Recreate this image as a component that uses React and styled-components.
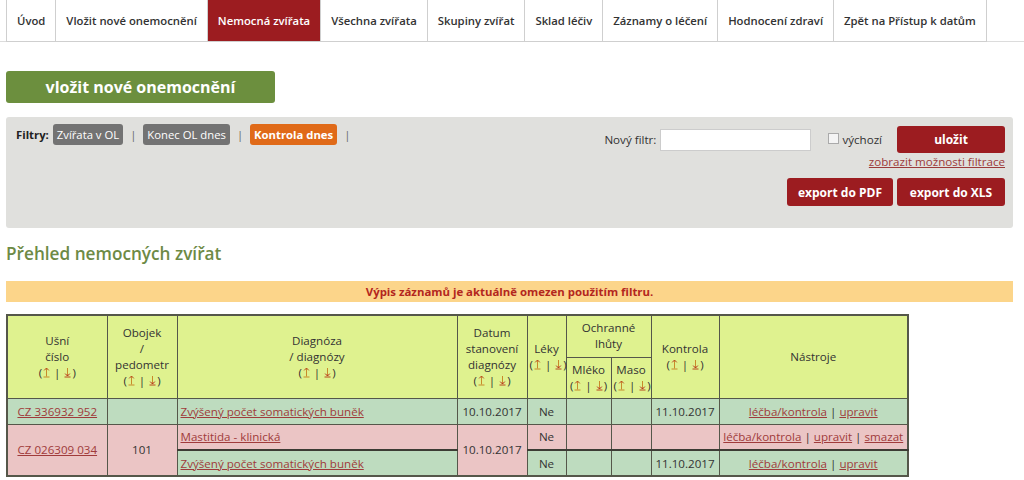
import React from "react";
import styled, { createGlobalStyle } from "styled-components";

const Global = createGlobalStyle`
  body { margin: 0; font-family: "Open Sans", "DejaVu Sans", sans-serif; color: #333; background: #fff; }
  * { box-sizing: border-box; }
`;

const Page = styled.div`
  width: 1024px;
  padding: 0 11px 0 6px;
`;

const Tabs = styled.nav`
  display: flex;
  height: 42px;
  margin-left: -6px;
  margin-right: -11px;
  padding-left: 6px;
  border-bottom: 1px solid #dcdcdc;
`;

const Tab = styled.a`
  display: flex;
  align-items: center;
  padding: 0 10px;
  font-size: 11.3px;
  font-weight: 600;
  color: ${(p) => (p.$active ? "#fff" : "#333")};
  background: ${(p) => (p.$active ? "#9c1c20" : "#fff")};
  border-left: 1px solid #cfcfcf;
  border-right: ${(p) => (p.$last ? "1px solid #cfcfcf" : "none")};
  border-bottom: 1px solid #cfcfcf;
  margin-bottom: -1px;
  white-space: nowrap;
  text-decoration: none;
`;

const BigButton = styled.button`
  display: block;
  margin-top: 29px;
  width: 269px;
  height: 32px;
  border: none;
  border-radius: 3px;
  background: #6c8f3e;
  color: #fff;
  font-family: inherit;
  font-size: 16px;
  font-weight: 700;
`;

const FilterPanel = styled.section`
  margin-top: 14px;
  height: 111px;
  background: #e0e0dd;
  border-radius: 3px;
  display: flex;
  justify-content: space-between;
  padding: 7px 8px 0 10px;
`;

const ChipRow = styled.div`
  display: flex;
  align-items: center;
  height: 21px;
  font-size: 11.3px;
`;

const FilterLabel = styled.b`
  font-weight: 700;
  color: #222;
  margin-right: 4px;
`;

const Chip = styled.span`
  display: inline-block;
  padding: 2px 4px;
  border-radius: 3px;
  background: ${(p) => (p.$on ? "#e06a18" : "#737373")};
  color: #fff;
  font-weight: ${(p) => (p.$on ? 700 : 400)};
  line-height: 17px;
`;

const Sep = styled.span`
  color: #666;
  margin: 0 7px;
`;

const RightBlock = styled.div`
  display: flex;
  flex-direction: column;
  align-items: flex-end;
  padding-top: 2px;
`;

const SaveRow = styled.div`
  display: flex;
  align-items: center;
  font-size: 11.6px;
`;

const Input = styled.input`
  width: 151px;
  height: 22px;
  margin-left: 4px;
  border: 1px solid #ccc;
  background: #fff;
`;

const CheckLabel = styled.label`
  display: flex;
  align-items: center;
  margin-left: 17px;
  margin-right: 15px;
  color: #333;
`;

const Check = styled.span`
  width: 11px;
  height: 11px;
  border: 1px solid #aaa;
  background: #f4f4f4;
  margin-right: 3px;
  margin-top: -3px;
`;

const RedButton = styled.button`
  width: ${(p) => p.$w || 108}px;
  height: ${(p) => p.$h || 27}px;
  border: none;
  border-radius: 3px;
  background: #9c1c20;
  color: #fff;
  font-family: inherit;
  font-size: 12px;
  font-weight: 700;
`;

const FilterLink = styled.a`
  margin-top: 1px;
  font-size: 11.6px;
  color: #9d3a3a;
  text-decoration: underline;
`;

const ExportRow = styled.div`
  display: flex;
  gap: 4px;
  margin-top: 9px;
`;

const Heading = styled.h2`
  margin: 13px 0 0;
  font-size: 17.2px;
  font-weight: 600;
  color: #6d8a45;
  line-height: 26px;
`;

const Notice = styled.div`
  margin-top: 14px;
  height: 21px;
  background: #fcd58a;
  color: #b3261e;
  font-size: 11.4px;
  font-weight: 700;
  text-align: center;
  line-height: 21px;
`;

const Table = styled.table`
  margin-top: 12px;
  border-collapse: collapse;
  width: 901px;
  font-size: 11.6px;
  border: 2px solid #55574a;
  table-layout: fixed;
`;

const HeadRow = styled.tr`
  height: ${(p) => p.$h}px;
`;

const Th = styled.th`
  background: #dff28f;
  font-weight: 400;
  color: #333;
  border: 1px solid #55574a;
  padding: 0 2px;
  line-height: 16px;
  vertical-align: middle;
  text-align: center;
`;

const BodyRow = styled.tr`
  height: 26px;
`;

const Td = styled.td`
  background: ${(p) => (p.$pink ? "#ebc5c5" : "#bedcbf")};
  border: 1px solid #55574a;
  border-top: ${(p) => (p.$split ? "2px solid #3c3c34" : "1px solid #55574a")};
  padding: 0 3px;
  text-align: ${(p) => p.$align || "center"};
  vertical-align: middle;
  color: #333;
  white-space: nowrap;
`;

const Link = styled.a`
  color: #a03b3b;
  text-decoration: underline;
`;

const SortWrap = styled.span`
  white-space: nowrap;
`;

const ArrowIcon = styled.svg`
  width: 7px;
  height: 11px;
  vertical-align: -1px;
  margin: 0 1px;
`;

const UpArrow = () => (
  <ArrowIcon viewBox="0 0 7 11">
    <path d="M3.5 1 L3.5 9.5" stroke="#c88a2a" strokeWidth="1" fill="none" />
    <path d="M1.2 3.4 L3.5 1 L5.8 3.4" stroke="#b8461e" strokeWidth="1" fill="none" />
    <path d="M0.5 10 L6.5 10" stroke="#c88a2a" strokeWidth="1" />
  </ArrowIcon>
);

const DownArrow = () => (
  <ArrowIcon viewBox="0 0 7 11">
    <path d="M3.5 1 L3.5 9" stroke="#c88a2a" strokeWidth="1" fill="none" />
    <path d="M1.2 6.6 L3.5 9 L5.8 6.6" stroke="#b8261e" strokeWidth="1" fill="none" />
    <path d="M0.5 10 L6.5 10" stroke="#b8461e" strokeWidth="1" />
  </ArrowIcon>
);

const Sort = () => (
  <SortWrap>
    (<UpArrow /> | <DownArrow />)
  </SortWrap>
);

const tabs = [
  "Úvod",
  "Vložit nové onemocnění",
  "Nemocná zvířata",
  "Všechna zvířata",
  "Skupiny zvířat",
  "Sklad léčiv",
  "Záznamy o léčení",
  "Hodnocení zdraví",
  "Zpět na Přístup k datům",
];

export default function App() {
  return (
    <>
      <Global />
      <Page>
        <Tabs>
          {tabs.map((t, i) => (
            <Tab key={t} $active={i === 2} $last={i === tabs.length - 1}>
              {t}
            </Tab>
          ))}
        </Tabs>

        <BigButton>vložit nové onemocnění</BigButton>

        <FilterPanel>
          <ChipRow>
            <FilterLabel>Filtry:</FilterLabel>
            <Chip>Zvířata v OL</Chip>
            <Sep>|</Sep>
            <Chip>Konec OL dnes</Chip>
            <Sep>|</Sep>
            <Chip $on>Kontrola dnes</Chip>
            <Sep>|</Sep>
          </ChipRow>
          <RightBlock>
            <SaveRow>
              Nový filtr:
              <Input />
              <CheckLabel>
                <Check />
                výchozí
              </CheckLabel>
              <RedButton>uložit</RedButton>
            </SaveRow>
            <FilterLink>zobrazit možnosti filtrace</FilterLink>
            <ExportRow>
              <RedButton $w={106} $h={28}>export do PDF</RedButton>
              <RedButton $h={28}>export do XLS</RedButton>
            </ExportRow>
          </RightBlock>
        </FilterPanel>

        <Heading>Přehled nemocných zvířat</Heading>
        <Notice>Výpis záznamů je aktuálně omezen použitím filtru.</Notice>

        <Table>
          <colgroup>
            <col style={{ width: 100 }} />
            <col style={{ width: 70 }} />
            <col style={{ width: 280 }} />
            <col style={{ width: 70 }} />
            <col style={{ width: 39 }} />
            <col style={{ width: 45 }} />
            <col style={{ width: 40 }} />
            <col style={{ width: 68 }} />
            <col style={{ width: 189 }} />
          </colgroup>
          <thead>
            <HeadRow $h={42}>
              <Th rowSpan={2}>
                Ušní<br />číslo<br /><Sort />
              </Th>
              <Th rowSpan={2}>
                Obojek<br />/<br />pedometr<br /><Sort />
              </Th>
              <Th rowSpan={2}>
                Diagnóza<br />/ diagnózy<br /><Sort />
              </Th>
              <Th rowSpan={2}>
                Datum<br />stanovení<br />diagnózy<br /><Sort />
              </Th>
              <Th rowSpan={2}>
                Léky<br /><Sort />
              </Th>
              <Th colSpan={2}>
                Ochranné<br />lhůty
              </Th>
              <Th rowSpan={2}>
                Kontrola<br /><Sort />
              </Th>
              <Th rowSpan={2}>Nástroje</Th>
            </HeadRow>
            <HeadRow $h={41}>
              <Th>
                Mléko<br /><Sort />
              </Th>
              <Th>
                Maso<br /><Sort />
              </Th>
            </HeadRow>
          </thead>
          <tbody>
            <BodyRow>
              <Td><Link>CZ 336932 952</Link></Td>
              <Td></Td>
              <Td $align="left"><Link>Zvýšený počet somatických buněk</Link></Td>
              <Td>10.10.2017</Td>
              <Td>Ne</Td>
              <Td></Td>
              <Td></Td>
              <Td>11.10.2017</Td>
              <Td><Link>léčba/kontrola</Link> | <Link>upravit</Link></Td>
            </BodyRow>
            <BodyRow>
              <Td $pink rowSpan={2}><Link>CZ 026309 034</Link></Td>
              <Td $pink rowSpan={2}>101</Td>
              <Td $pink $align="left"><Link>Mastitida - klinická</Link></Td>
              <Td $pink rowSpan={2}>10.10.2017</Td>
              <Td $pink>Ne</Td>
              <Td $pink></Td>
              <Td $pink></Td>
              <Td $pink></Td>
              <Td $pink>
                <Link>léčba/kontrola</Link> | <Link>upravit</Link> | <Link>smazat</Link>
              </Td>
            </BodyRow>
            <BodyRow>
              <Td $align="left" $split>
                <Link>Zvýšený počet somatických buněk</Link>
              </Td>
              <Td $split>Ne</Td>
              <Td $split></Td>
              <Td $split></Td>
              <Td $split>11.10.2017</Td>
              <Td $split><Link>léčba/kontrola</Link> | <Link>upravit</Link></Td>
            </BodyRow>
          </tbody>
        </Table>
      </Page>
    </>
  );
}
